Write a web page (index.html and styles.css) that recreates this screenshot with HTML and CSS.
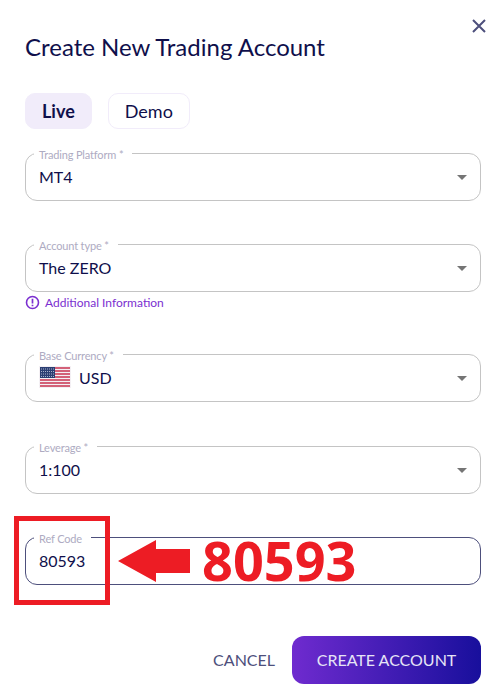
FILE: index.html

```html
<!DOCTYPE html>
<html lang="en">
<head>
  <meta charset="UTF-8">
  <title>Create New Trading Account</title>
  <link rel="stylesheet" href="styles.css">
</head>
<body>

  <div class="dialog">
    <button class="close" aria-label="Close">
      <svg width="14" height="14" viewBox="0 0 14 14"><path d="M1 1L13 13M13 1L1 13" stroke="#4d4f7c" stroke-width="2" fill="none"/></svg>
    </button>

    <h1 class="title">Create New Trading Account</h1>

    <div class="tabs">
      <button class="tab active">Live</button>
      <button class="tab">Demo</button>
    </div>

    <div class="field">
      <span class="field-label">Trading Platform *</span>
      <span class="field-value">MT4</span>
      <span class="caret"></span>
    </div>

    <div class="field field-account">
      <span class="field-label">Account type *</span>
      <span class="field-value">The ZERO</span>
      <span class="caret"></span>
    </div>

    <div class="info">
      <svg width="15" height="15" viewBox="0 0 15 15">
        <circle cx="7.5" cy="7.5" r="6" stroke="#7b2fd0" stroke-width="1.6" fill="none"/>
        <path d="M7.5 3.8V8.4M7.5 9.7V11.2" stroke="#7b2fd0" stroke-width="1.7" fill="none"/>
      </svg>
      <span>Additional Information</span>
    </div>

    <div class="field field-currency">
      <span class="field-label">Base Currency *</span>
      <svg class="flag" width="32" height="22" viewBox="0 0 32 22">
        <rect width="32" height="22" fill="#f4f0f4"/>
        <path d="M1 2H31M1 5H31M1 8H31M1 11H31M1 14H31M1 17H31M1 20H31" stroke="#c8324f" stroke-width="1.6"/>
        <rect x="1" y="1" width="15" height="11" fill="#2b3f73"/>
        <path d="M2 3H15M2 5.5H15M2 8H15M2 10.5H15" stroke="#a9b2cc" stroke-width="1" stroke-dasharray="1 1"/>
      </svg>
      <span class="field-value">USD</span>
      <span class="caret"></span>
    </div>

    <div class="field field-leverage">
      <span class="field-label">Leverage *</span>
      <span class="field-value">1:100</span>
      <span class="caret"></span>
    </div>

    <div class="field field-ref">
      <span class="field-label">Ref Code</span>
      <span class="field-value">80593</span>
    </div>

    <div class="actions">
      <button class="cancel">CANCEL</button>
      <button class="create">CREATE ACCOUNT</button>
    </div>
  </div>

  <!-- red markup drawn over the screenshot -->
  <div class="mark-box"></div>
  <svg class="mark-arrow" width="72" height="42" viewBox="0 0 72 42"><path d="M0 21L38 0V9H72V33H38V42Z" fill="#ed1c24"/></svg>
  <div class="mark-code">80593</div>

</body>
</html>
```

FILE: styles.css

```css
body {
  margin: 0;
  font-family: 'Lato', sans-serif;
  background: #fff;
  color: #0f0f4b;
}

.dialog {
  padding: 0 22px 0 25px;
}

button {
  font-family: inherit;
  cursor: pointer;
}

.close {
  position: absolute;
  top: 19px;
  left: 472px;
  padding: 0;
  width: 14px;
  height: 14px;
  border: none;
  background: none;
  line-height: 0;
}

.title {
  margin: 0;
  padding-top: 32px;
  font-size: 24px;
  line-height: 29px;
  font-weight: 400;
}

.tabs {
  display: flex;
  gap: 16px;
  margin-top: 32px;
}

.tab {
  height: 36px;
  padding: 0 16px;
  border: 1px solid #f1ecfa;
  border-radius: 10px;
  background: #fff;
  color: #0f0f4b;
  font-size: 18px;
}

.tab.active {
  padding: 0 16px;
  border-color: #f1ecfa;
  background: #f1ecfa;
  font-weight: 700;
}

.field {
  position: relative;
  display: flex;
  align-items: center;
  box-sizing: border-box;
  height: 48px;
  margin-top: 24px;
  padding: 0 13px 2px;
  border: 1px solid #c4c4c4;
  border-radius: 12px;
}

.field-account {
  margin-top: 43px;
}

.field-currency {
  margin-top: 44px;
}

.field-leverage {
  margin-top: 44px;
}

.field-ref {
  margin-top: 43px;
  border-color: #4d4f7c;
}

.field-label {
  position: absolute;
  top: -6px;
  left: 8px;
  padding: 0 9px 0 5px;
  background: #fff;
  color: #aeabc2;
  font-size: 11px;
  letter-spacing: -0.15px;
  line-height: 14px;
}

.field-value {
  font-size: 16px;
}

.flag {
  margin-right: 8px;
}

.caret {
  position: absolute;
  right: 13px;
  top: 21px;
  border-left: 5px solid transparent;
  border-right: 5px solid transparent;
  border-top: 5px solid #757575;
}

.info {
  display: flex;
  align-items: center;
  gap: 5px;
  margin-top: 3px;
  height: 15px;
  color: #7b2fd0;
  font-size: 12px;
}

.actions {
  display: flex;
  justify-content: flex-end;
  align-items: center;
  gap: 17px;
  margin-top: 51px;
}

.cancel {
  height: 48px;
  padding: 0 0 2px;
  border: none;
  background: none;
  color: #4d4f7c;
  font-size: 16px;
}

.create {
  width: 189px;
  height: 48px;
  padding: 0 0 2px;
  border: none;
  border-radius: 12px;
  background: linear-gradient(to right, #6f2bcf, #180f9c);
  color: #e6e4f6;
  font-size: 16px;
}

.mark-box {
  position: absolute;
  top: 516px;
  left: 14px;
  width: 96px;
  height: 89px;
  box-sizing: border-box;
  border: 5px solid #ed1c24;
}

.mark-arrow {
  position: absolute;
  top: 540px;
  left: 118px;
}

.mark-code {
  position: absolute;
  top: 524px;
  left: 202px;
  color: #ed1c24;
  font-family: 'Open Sans', sans-serif;
  font-size: 54px;
  line-height: 72px;
  font-weight: 700;
}
```
